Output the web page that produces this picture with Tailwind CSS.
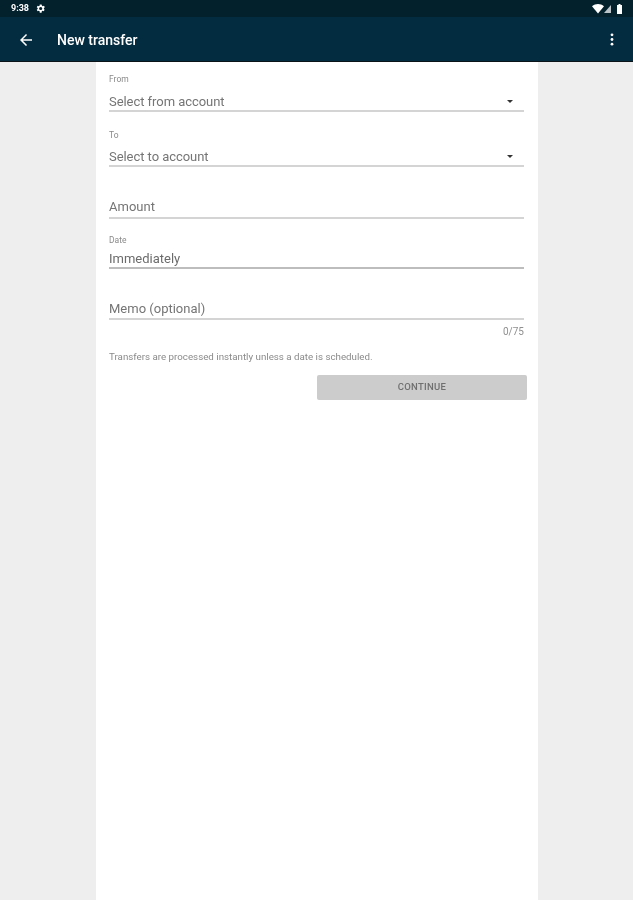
<!DOCTYPE html>
<html><head><meta charset="utf-8"><script src="https://cdn.jsdelivr.net/npm/@tailwindcss/browser@4"></script></head>
<body class="m-0">
<div class="w-[633px] h-[900px] overflow-hidden flex flex-col bg-[#eeeeee] font-['Roboto',sans-serif] blur-[0.4px]">
  <div class="h-[17px] bg-[#03202d] flex items-center px-[11px] text-white shrink-0">
    <span class="text-[9px] font-bold leading-none">9:38</span>
    <svg class="ml-[6px] w-[11px] h-[11px]" viewBox="0 0 24 24" fill="#fff"><path d="M19.4 13a7.5 7.5 0 000-2l2.1-1.6-2-3.5-2.5 1a7.6 7.6 0 00-1.7-1L14.4 3h-4l-.4 2.9a7.6 7.6 0 00-1.7 1l-2.5-1-2 3.5L5.9 11a7.5 7.5 0 000 2l-2.1 1.6 2 3.5 2.5-1a7.6 7.6 0 001.7 1l.4 2.9h4l.4-2.9a7.6 7.6 0 001.7-1l2.5 1 2-3.5zM12.4 15.5a3.5 3.5 0 110-7 3.5 3.5 0 010 7z"/></svg>
    <svg class="ml-auto w-[12px] h-[10px]" viewBox="0 0 12 10" fill="#fff"><path d="M0 2.2C3.5-.7 8.5-.7 12 2.2L6 9.5z"/></svg>
    <svg class="w-[7px] h-[8px]" viewBox="0 0 7 8" fill="#b9c3c8"><path d="M7 0v8H0z"/></svg>
    <svg class="ml-[6px] w-[5px] h-[10px]" viewBox="0 0 5 10" fill="#fff"><path d="M1.5 0h2v1H5v9H0V1h1.5z"/></svg>
  </div>
  <div class="h-[45px] bg-[#042c40] flex items-center text-white shrink-0 border-b border-[#0b1418] pt-[1px]">
    <svg class="ml-[20px] w-[12px] h-[12px]" viewBox="0 0 16 16" fill="#fff"><path d="M16 7H3.8l5.6-5.6L8 0 0 8l8 8 1.4-1.4L3.8 9H16z"/></svg>
    <span class="ml-[25px] text-[14px] font-medium leading-none">New transfer</span>
    <svg class="ml-auto mr-[19px] w-[4px] h-[13px]" viewBox="0 0 4 14" fill="#fff"><circle cx="2" cy="2" r="1.5"/><circle cx="2" cy="7" r="1.5"/><circle cx="2" cy="12" r="1.5"/></svg>
  </div>
  <main class="ml-[96px] w-[442px] flex-1 bg-white pl-[13px] pr-[14px] text-[#757575]">
    <div class="h-[50px] flex flex-col justify-end border-b-2 border-[#d4d4d4] relative">
      <span class="text-[8.5px] leading-none text-[#8a8a8a] absolute top-[13px]">From</span>
      <div class="flex items-center justify-between pr-[11px]"><span class="text-[13px] leading-[17px] tracking-[-0.05px]">Select from account</span>
        <svg class="w-[6px] h-[3px]" viewBox="0 0 6 3" fill="#333"><path d="M0 0h6L3 3z"/></svg></div>
    </div>
    <div class="h-[55px] flex flex-col justify-end border-b-2 border-[#d4d4d4] relative">
      <span class="text-[8.5px] leading-none text-[#8a8a8a] absolute top-[19px]">To</span>
      <div class="flex items-center justify-between pr-[11px]"><span class="text-[13px] leading-[17px] tracking-[-0.05px]">Select to account</span>
        <svg class="w-[6px] h-[3px]" viewBox="0 0 6 3" fill="#333"><path d="M0 0h6L3 3z"/></svg></div>
    </div>
    <div class="h-[52px] flex flex-col justify-end border-b-2 border-[#d4d4d4]">
      <span class="text-[13px] leading-[17px] pb-[2px]">Amount</span>
    </div>
    <div class="h-[50px] flex flex-col justify-end border-b-2 border-[#bdbdbd] relative">
      <span class="text-[8.5px] leading-none text-[#8a8a8a] absolute top-[17px]">Date</span>
      <span class="text-[13px] leading-[17px] text-[#6b6b6b]">Immediately</span>
    </div>
    <div class="h-[51px] flex flex-col justify-end border-b-2 border-[#d4d4d4]">
      <span class="text-[13px] leading-[17px] pb-[1px]">Memo (optional)</span>
    </div>
    <div class="text-right text-[10px] leading-none text-[#8f8f8f] mt-[7px]">0/75</div>
    <p class="text-[9.75px] leading-none text-[#8a8a8a] mt-[15px] m-0">Transfers are processed instantly unless a date is scheduled.</p>
    <div class="flex justify-end mt-[13px] -mr-[3px]">
      <div class="w-[210px] h-[25px] bg-[#cccccc] rounded-[2px] flex items-center justify-center text-[9.5px] font-medium tracking-[0.3px] text-[#6f6f6f]">CONTINUE</div>
    </div>
  </main>
</div>
</body></html>
